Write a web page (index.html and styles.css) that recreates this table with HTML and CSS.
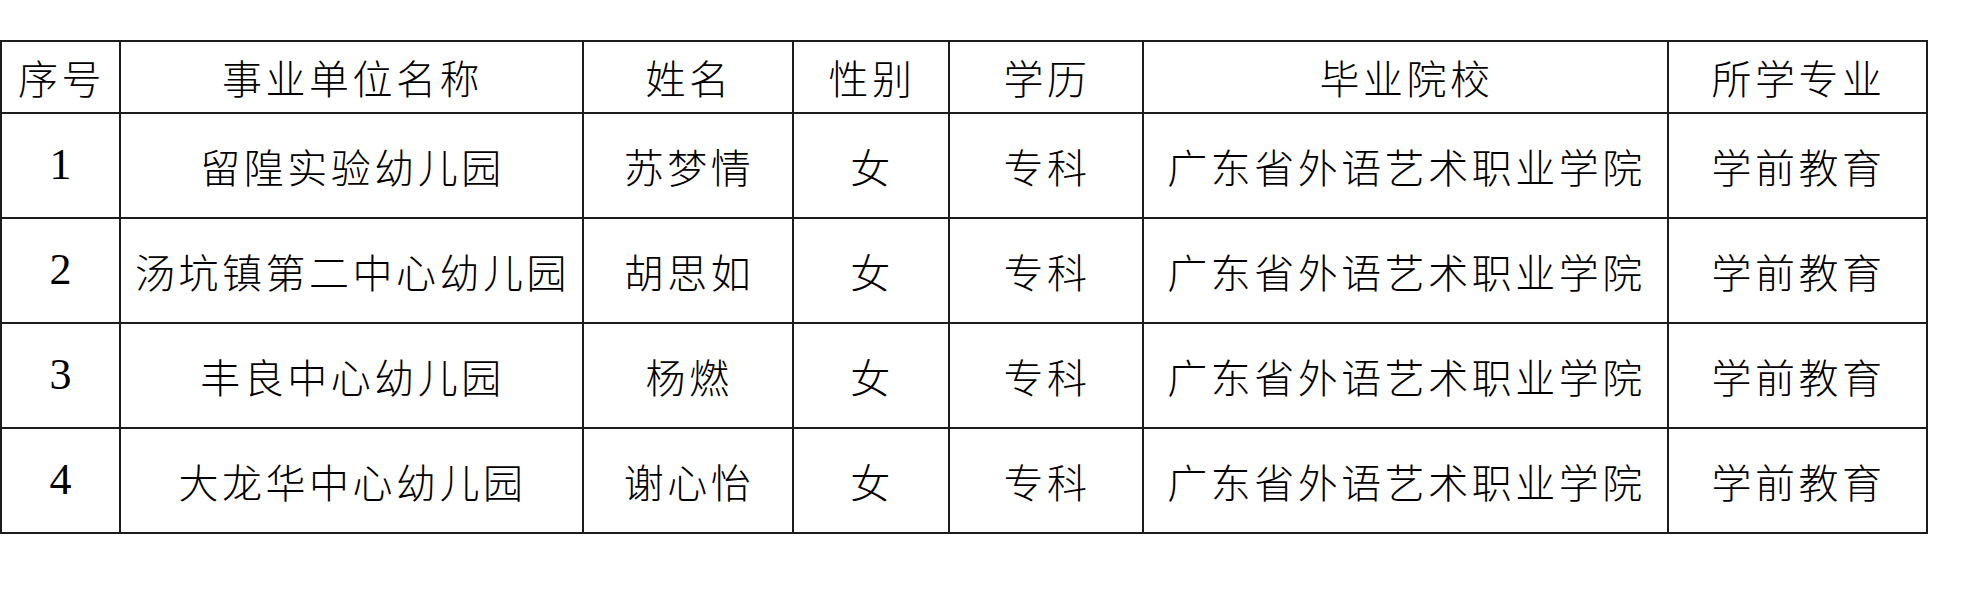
FILE: index.html
```html
<!DOCTYPE html>
<html lang="zh-CN">
<head>
<meta charset="utf-8">
<title>事业单位人员名单</title>
<link rel="stylesheet" href="styles.css">
</head>
<body>
<table class="roster">
  <colgroup>
    <col class="c-no">
    <col class="c-unit">
    <col class="c-name">
    <col class="c-sex">
    <col class="c-edu">
    <col class="c-school">
    <col class="c-major">
  </colgroup>
  <thead>
    <tr class="head">
      <th>序号</th>
      <th>事业单位名称</th>
      <th>姓名</th>
      <th>性别</th>
      <th>学历</th>
      <th>毕业院校</th>
      <th>所学专业</th>
    </tr>
  </thead>
  <tbody>
    <tr>
      <td class="num">1</td>
      <td>留隍实验幼儿园</td>
      <td>苏梦情</td>
      <td>女</td>
      <td>专科</td>
      <td>广东省外语艺术职业学院</td>
      <td>学前教育</td>
    </tr>
    <tr>
      <td class="num">2</td>
      <td>汤坑镇第二中心幼儿园</td>
      <td>胡思如</td>
      <td>女</td>
      <td>专科</td>
      <td>广东省外语艺术职业学院</td>
      <td>学前教育</td>
    </tr>
    <tr>
      <td class="num">3</td>
      <td>丰良中心幼儿园</td>
      <td>杨燃</td>
      <td>女</td>
      <td>专科</td>
      <td>广东省外语艺术职业学院</td>
      <td>学前教育</td>
    </tr>
    <tr>
      <td class="num">4</td>
      <td>大龙华中心幼儿园</td>
      <td>谢心怡</td>
      <td>女</td>
      <td>专科</td>
      <td>广东省外语艺术职业学院</td>
      <td>学前教育</td>
    </tr>
  </tbody>
</table>
</body>
</html>
```
FILE: styles.css
```css
html, body {
  margin: 0;
  padding: 0;
  background: #ffffff;
}

body {
  padding-top: 40px;
}

.roster {
  border-collapse: collapse;
  table-layout: fixed;
  width: 1926px;
  color: #000;
  font-family: "Noto Sans CJK SC", "Noto Sans CJK JP", sans-serif;
  font-weight: 300;
}

.c-no { width: 119px; }
.c-unit { width: 463px; }
.c-name { width: 210px; }
.c-sex { width: 156px; }
.c-edu { width: 194px; }
.c-school { width: 525px; }
.c-major { width: 259px; }

.roster th,
.roster td {
  border: 2px solid #1c1c1c;
  padding: 0 0 0 2px;
  text-align: center;
  vertical-align: middle;
  font-size: 40px;
  letter-spacing: 3.5px;
  line-height: 1.1;
  font-weight: 300;
  white-space: nowrap;
  overflow: hidden;
}

.roster .head th {
  height: 70px;
}

.roster tbody td {
  height: 103px;
}

.roster td.num {
  font-family: "Liberation Serif", "Times New Roman", serif;
  font-size: 44px;
  letter-spacing: 0;
  padding: 0;
}
```
